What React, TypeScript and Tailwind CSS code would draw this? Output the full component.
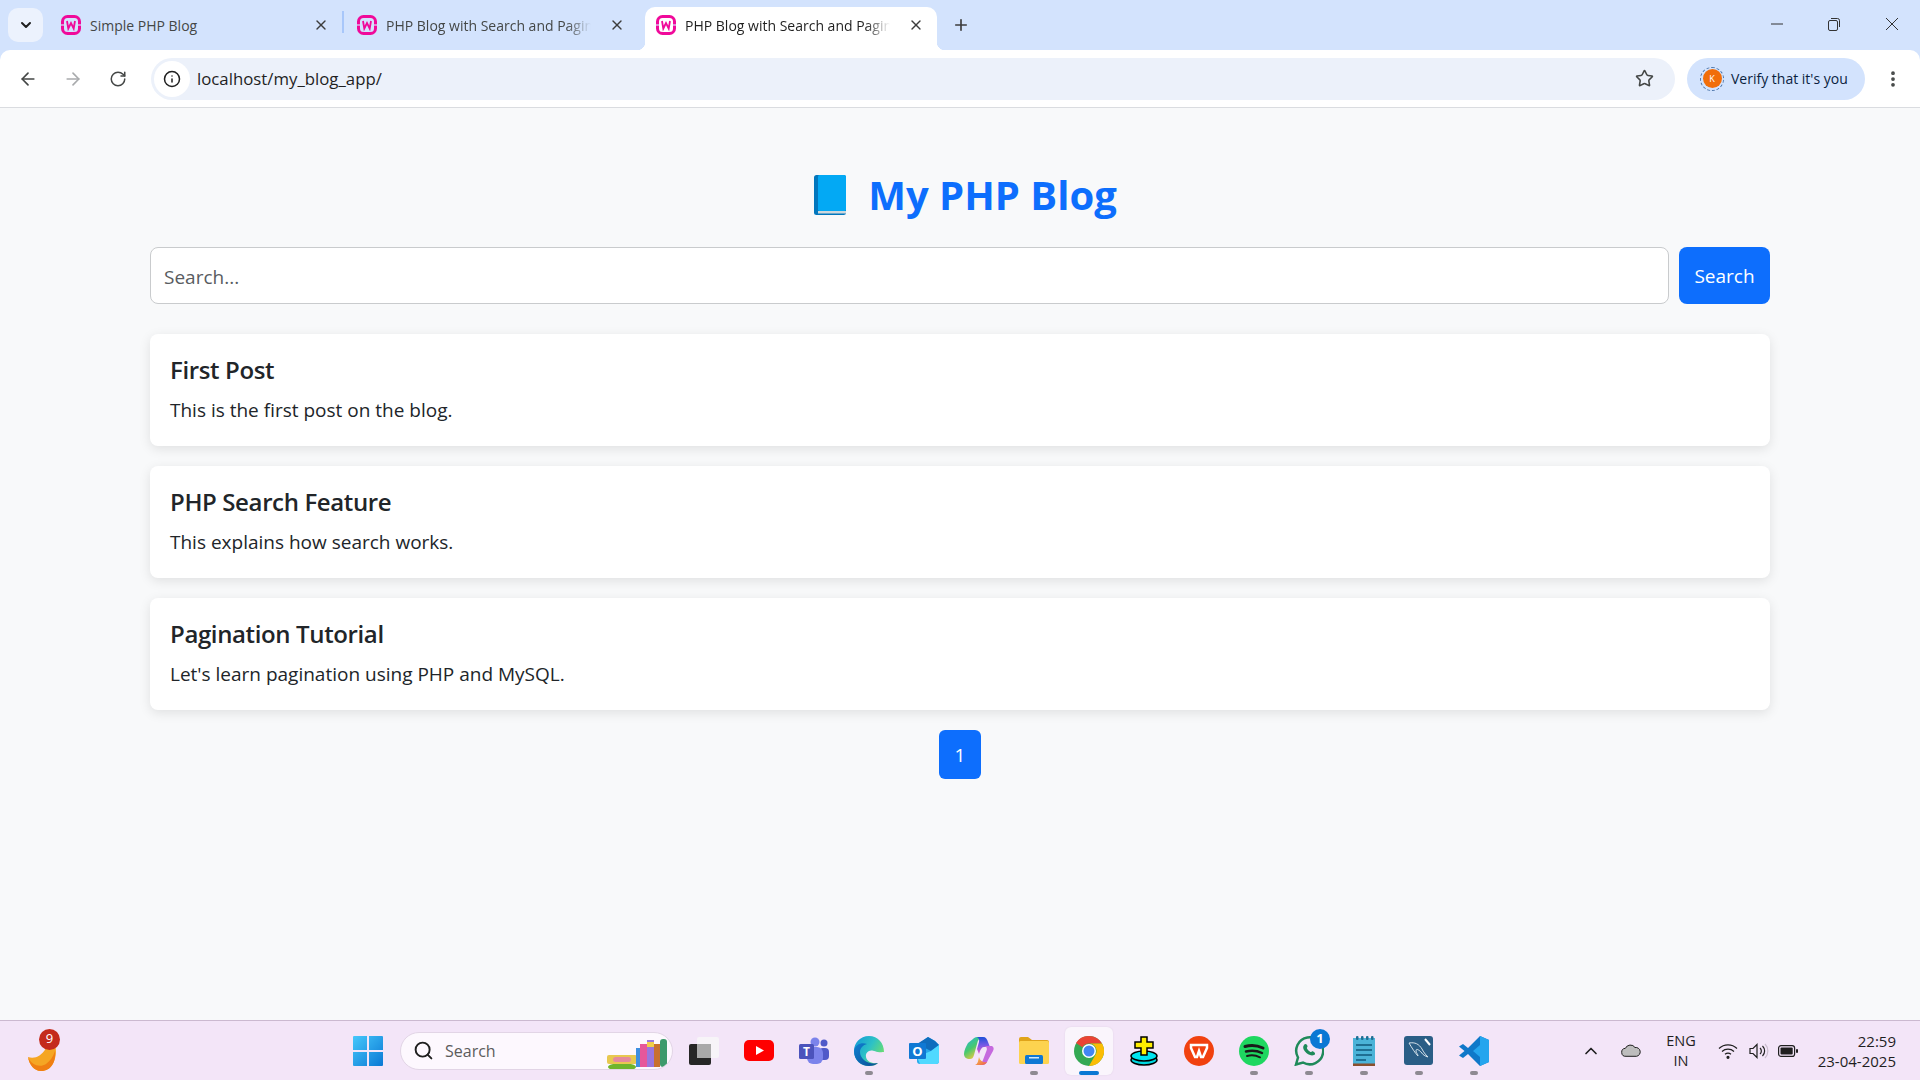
import { ArrowLeft, ArrowRight, ChevronDown, ChevronUp, Info, MoreVertical, Plus, RotateCw, Search, Star, X } from "lucide-react"

const uiFont = "font-['Open_Sans',sans-serif]"

function WampIcon() {
    return (
        <svg width="20" height="20" viewBox="0 0 20 20">
            <rect x="1.500" y="1.500" width="17" height="17" rx="5" fill="none" stroke="#f0099a" strokeWidth="3" />
            <path d="M0 9h3v2H0zM17 9h3v2h-3z" fill="#d3e3fd" opacity="0.6" />
            <path d="M6 6l1.300 7.500L10 8l2.700 5.500L14 6" fill="none" stroke="#f0099a" strokeWidth="1.800" />
        </svg>
    )
}

function Tab({ title, active, fade }: { title: string; active?: boolean; fade?: boolean }) {
    return (
        <div className={`relative flex h-[43px] w-[292px] shrink-0 items-center rounded-t-[10px] pb-[7px] pl-[11px] pr-[13px] ${active ? "bg-white" : ""}`}>
            {active && <span className="absolute bottom-0 -left-2 h-2 w-2 bg-[radial-gradient(circle_at_0_0,#d3e3fd_8px,#ffffff_8.5px)]" />}
            {active && <span className="absolute bottom-0 -right-2 h-2 w-2 bg-[radial-gradient(circle_at_100%_0,#d3e3fd_8px,#ffffff_8.5px)]" />}
            <WampIcon />
            <span className={`ml-[9px] w-[205px] overflow-hidden whitespace-nowrap text-[14px] ${active ? "text-[#1f1f1f]" : "text-[#444746]"} ${fade ? "[mask-image:linear-gradient(to_right,#000_88%,transparent)]" : ""}`}>{title}</span>
            <X size={16} strokeWidth={2} className="ml-auto text-[#3c3c3c]" />
        </div>
    )
}

function BrowserChrome() {
    return (
        <header className={`shrink-0 bg-[#d3e3fd] ${uiFont}`}>
            <div className="flex h-[50px] items-end">
                <div className="mb-[8px] ml-2 flex h-[34px] w-[35px] items-center justify-center rounded-[10px] bg-[#ecf2fd]">
                    <ChevronDown size={16} strokeWidth={3} className="text-[#1f1f1f]" />
                </div>
                <div className="ml-[7px] flex items-end">
                    <Tab title="Simple PHP Blog" />
                    <div className="mb-[17px] h-[22px] w-[2px] bg-[#a8c7fa]" />
                    <div className="ml-[2px]"><Tab title="PHP Blog with Search and Pagination" fade /></div>
                    <div className="ml-[7px]"><Tab title="PHP Blog with Search and Pagination" active fade /></div>
                </div>
                <Plus size={18} strokeWidth={2.2} className="mb-[16px] ml-[15px] text-[#3c3c3c]" />
                <div className="mb-[19px] ml-auto flex items-center pr-[21px] text-[#333]">
                    <svg width="12" height="2" viewBox="0 0 12 2"><path d="M0 1h12" stroke="currentColor" /></svg>
                    <svg className="ml-[44px]" width="14" height="14" viewBox="0 0 14 14" fill="none" stroke="currentColor"><rect x="1.500" y="3.500" width="9" height="10" rx="1.500" /><path d="M4 1.500h6.500a2 2 0 0 1 2 2V10" /></svg>
                    <svg className="ml-[44px]" width="14" height="14" viewBox="0 0 14 14" stroke="currentColor"><path d="M1 1l12 12M13 1L1 13" /></svg>
                </div>
            </div>
            <div className="flex h-[57px] items-center rounded-t-[10px] bg-white">
                <ArrowLeft size={20} strokeWidth={2} className="ml-[18px] text-[#444746]" />
                <ArrowRight size={20} strokeWidth={2} className="ml-[25px] text-[#a9abad]" />
                <RotateCw size={18} strokeWidth={2} className="ml-[26px] text-[#444746]" />
                <div className="ml-[24px] flex h-[42px] w-[1524px] items-center rounded-full bg-[#ecf1fa] pl-[3px]">
                    <div className="flex h-[36px] w-[36px] items-center justify-center rounded-full bg-white">
                        <Info size={18} strokeWidth={2} className="text-[#1f1f1f]" />
                    </div>
                    <span className="ml-[7px] text-[16.8px] text-[#1f1f1f]">localhost/my_blog_app/</span>
                    <Star size={19} strokeWidth={2} className="ml-auto mr-[21px] text-[#444746]" />
                </div>
                <div className="ml-[12px] flex h-[42px] w-[178px] items-center rounded-full bg-[#d3e3fd] pl-[13px]">
                    <div className="flex h-[24px] w-[24px] items-center justify-center rounded-full border border-dashed border-[#4f78ad]">
                        <span className="flex h-[19px] w-[19px] items-center justify-center rounded-full bg-[#f16e0a] text-[9px] text-white">K</span>
                    </div>
                    <span className="ml-[7px] whitespace-nowrap text-[14px] text-[#0b1f3f]">Verify that it's you</span>
                </div>
                <MoreVertical size={20} strokeWidth={2.5} className="ml-[18px] text-[#444746]" />
            </div>
            <div className="h-[1px] bg-[#dadce0]" />
        </header>
    )
}

function PostCard({ title, body }: { title: string; body: string }) {
    return (
        <article className="h-[112px] rounded-lg bg-white px-5 pt-[18px] shadow-[0_3px_12px_rgba(0,0,0,0.1)]">
            <h2 className="text-[24px] font-semibold leading-[36px] tracking-[-0.37px] text-[#212529]">{title}</h2>
            <p className="mt-[8px] text-[19px] leading-[29px] text-[#212529]">{body}</p>
        </article>
    )
}

function BlogPage() {
    return (
        <main className="flex-1 bg-[#f8f9fa] px-[150px] font-['Open_Sans',sans-serif]">
            <h1 className="mt-[57px] flex items-center justify-center pl-[11px] text-[40px] font-bold leading-[60px] text-[#0d6efd]">
                <svg width="32" height="40" viewBox="0 0 32 40">
                    <rect x="0" y="0" width="32" height="40" rx="2.500" fill="#0277bd" />
                    <rect x="4" y="0" width="28" height="36" rx="1.500" fill="#03a9f4" />
                    <rect x="4" y="36" width="28" height="2.500" fill="#cfd8dc" />
                </svg>
                <span className="ml-[22px]">My PHP Blog</span>
            </h1>
            <form className="mt-[22px] flex gap-[10px]">
                <div className="flex h-[57px] flex-1 items-center rounded-lg border border-[#c9cbcd] bg-white pl-[13px] pt-[3px] text-[19px] text-[#595c5f]">Search...</div>
                <button type="button" className="h-[57px] w-[91px] rounded-lg bg-[#0d6efd] pt-[2px] text-[19px] text-white">Search</button>
            </form>
            <section className="mt-[30px] flex flex-col gap-5">
                <PostCard title="First Post" body="This is the first post on the blog." />
                <PostCard title="PHP Search Feature" body="This explains how search works." />
                <PostCard title="Pagination Tutorial" body="Let's learn pagination using PHP and MySQL." />
            </section>
            <div className="mt-5 flex justify-center">
                <span className="flex h-[49px] w-[42px] items-center justify-center rounded-md bg-[#0d6efd] pt-[2px] text-[19px] text-white">1</span>
            </div>
        </main>
    )
}

function Slot({ children, dot, active }: { children: React.ReactNode; dot?: boolean; active?: boolean }) {
    return (
        <div className={`relative flex h-[48px] shrink-0 items-center justify-center ${active ? "mx-[3.5px] w-[48px] rounded-md bg-[#faf5fc] shadow-[0_0_2px_rgba(0,0,0,0.08)]" : "w-[55px]"}`}>
            {children}
            {dot && <span className="absolute bottom-0 h-[4px] w-[8px] rounded-full bg-[#8e8a92]" />}
            {active && <span className="absolute bottom-0 h-[4px] w-[20px] rounded-full bg-[#0a78d4]" />}
        </div>
    )
}

function TaskbarIcons() {
    return (
        <>
            <Slot>
                <svg width="30" height="28" viewBox="0 0 30 28"><rect x="0" y="7" width="22" height="21" rx="2" fill="#262626" /><rect x="8" y="0" width="22" height="21" rx="2" fill="#f7f4f8" /><rect x="8" y="7" width="14" height="14" fill="#a9a9a9" /></svg>
            </Slot>
            <Slot>
                <svg width="30" height="22" viewBox="0 0 30 22"><rect width="30" height="21" rx="5" fill="#f00" /><path d="M12 6l8 4.500-8 4.500z" fill="#fff" /></svg>
            </Slot>
            <Slot>
                <svg width="30" height="28" viewBox="0 0 30 28">
                    <circle cx="25" cy="6" r="3.500" fill="#5059c9" /><rect x="20" y="11" width="10" height="12" rx="4" fill="#5059c9" />
                    <circle cx="16" cy="5" r="4.500" fill="#7b83eb" /><rect x="8" y="10" width="16" height="17" rx="6" fill="#7b83eb" />
                    <rect x="0" y="7" width="15" height="15" rx="1.500" fill="#4b53bc" /><text x="7.500" y="19" textAnchor="middle" fontSize="12" fontWeight="700" fill="#fff" fontFamily="Open Sans, sans-serif">T</text>
                </svg>
            </Slot>
            <Slot dot>
                <svg width="30" height="30" viewBox="0 0 30 30">
                    <defs>
                        <linearGradient id="edgeTop" x1="0" y1="0" x2="1" y2="0.6"><stop offset="0" stopColor="#1196d8" /><stop offset="0.55" stopColor="#2dc1c6" /><stop offset="1" stopColor="#6fe06a" /></linearGradient>
                        <linearGradient id="edgeLow" x1="0" y1="0" x2="1" y2="1"><stop offset="0" stopColor="#0f7fd0" /><stop offset="1" stopColor="#0b4f96" /></linearGradient>
                    </defs>
                    <path d="M15 0C6 0 0 7 0 15c0 9 7 15 15 15 4 0 7-1 9-3-5 1-11-1-12-6-.7-3 1-5 3-6 4-2 6 2 15 1 0-9-6-16-15-16z" fill="url(#edgeTop)" />
                    <path d="M0 15C1 8 8 6 13 8c-4 1-7 4-7 8 0 7 8 13 18 11-2 2-5 3-9 3C7 30 0 24 0 15z" fill="url(#edgeLow)" />
                </svg>
            </Slot>
            <Slot>
                <svg width="30" height="27" viewBox="0 0 30 27">
                    <path d="M8 8l11-8 7 4 4 4v16a3 3 0 0 1-3 3H11a3 3 0 0 1-3-3z" fill="#28a8ea" />
                    <path d="M19 0l7 4 4 4-8 6-14-7z" fill="#0f6cbd" /><path d="M8 20l14-6 8-6v16a3 3 0 0 1-3 3H11z" fill="#50d9ff" />
                    <rect x="0" y="6" width="17" height="16" rx="1" fill="#0f78d4" /><text x="8.500" y="19" textAnchor="middle" fontSize="13" fontWeight="700" fill="#fff" fontFamily="Open Sans, sans-serif">O</text>
                </svg>
            </Slot>
            <Slot>
                <svg width="30" height="28" viewBox="0 0 30 28">
                    <defs>
                        <linearGradient id="copA" x1="0" y1="0" x2="0.6" y2="1"><stop offset="0" stopColor="#1fb6e0" /><stop offset="0.55" stopColor="#47c96f" /><stop offset="1" stopColor="#f5c93c" /></linearGradient>
                        <linearGradient id="copB" x1="0.5" y1="0" x2="0.5" y2="1"><stop offset="0" stopColor="#1c4fd8" /><stop offset="0.5" stopColor="#7a5ae6" /><stop offset="1" stopColor="#e457c2" /></linearGradient>
                        <linearGradient id="copC" x1="0" y1="0" x2="1" y2="1"><stop offset="0" stopColor="#f5d04a" /><stop offset="1" stopColor="#ef5a4c" /></linearGradient>
                    </defs>
                    <path d="M9 2c1-1 2-2 4-2h5c-3 1-4 3-5 7l-3 11c-1 3-2 4-4 4-4 0-6-2-6-5 0-4 2-7 4-11z" fill="url(#copA)" />
                    <path d="M13 0h6c3 0 4 2 5 5l2 5h-6c-2 0-3 2-4 4l-1 3-2-5 2-7c.5-2 0-4-2-5z" fill="url(#copB)" />
                    <path d="M11 28h7c3 0 5-2 6-5l5-9c1-2 1-4-1-5h-8c4 1 3 4 2 6l-3 8c-1 3-4 5-8 5z" fill="#c569de" />
                    <path d="M11 28h7c2 0 4-1 5-3-4 1-7-1-8-5-1 4-1 7-4 8z" fill="url(#copC)" />
                </svg>
            </Slot>
            <Slot dot>
                <svg width="30" height="27" viewBox="0 0 30 27">
                    <path d="M0 2a2 2 0 0 1 2-2h7l4 3h15a2 2 0 0 1 2 2v3H0z" fill="#e0a41a" />
                    <rect x="0" y="4" width="30" height="23" rx="1.500" fill="#fdd34f" />
                    <rect x="6" y="18" width="18" height="9" rx="1.500" fill="#0f78d4" /><rect x="10" y="20" width="10" height="1.500" fill="#cfe8fb" />
                </svg>
            </Slot>
            <Slot active>
                <svg width="30" height="30" viewBox="0 0 30 30">
                    <circle cx="15" cy="15" r="15" fill="#34a853" />
                    <path d="M15 0a15 15 0 0 1 13 7.500H15a7.500 7.500 0 0 0-6.500 3.750L2 7a15 15 0 0 1 13-7z" fill="#ea4335" />
                    <path d="M28 7.500A15 15 0 0 1 15 30l6.500-11.250A7.500 7.500 0 0 0 15 7.500z" fill="#fbbc04" />
                    <circle cx="15" cy="15" r="7" fill="#fff" /><circle cx="15" cy="15" r="5.500" fill="#4285f4" />
                </svg>
            </Slot>
            <Slot>
                <svg width="28" height="30" viewBox="0 0 28 30">
                    <ellipse cx="14" cy="24" rx="13" ry="5" fill="#00d8e0" stroke="#000" strokeWidth="1.500" />
                    <ellipse cx="14" cy="20" rx="13" ry="5" fill="#00e5f0" stroke="#000" strokeWidth="1.500" />
                    <path d="M11 1h6v5h6v6h-6v7h-6v-7H5V6h6z" fill="#ffee00" stroke="#000" strokeWidth="1.500" />
                </svg>
            </Slot>
            <Slot>
                <svg width="30" height="30" viewBox="0 0 30 30">
                    <circle cx="15" cy="15" r="15" fill="#f1410f" />
                    <path d="M7 9h16v3l-4 9h-2l-2-6-2 6h-2L7 12z" fill="none" stroke="#fff" strokeWidth="2.500" />
                </svg>
            </Slot>
            <Slot dot>
                <svg width="30" height="30" viewBox="0 0 30 30">
                    <circle cx="15" cy="15" r="15" fill="#1ed760" />
                    <g fill="none" stroke="#1a1a1a" strokeLinecap="round"><path d="M6 10.500c6-1.700 12-1.300 18 1.500" strokeWidth="3" /><path d="M7 15.500c5-1.300 11-1 16 1.500" strokeWidth="2.500" /><path d="M8 20c4-1 9-.7 13 1.300" strokeWidth="2" /></g>
                </svg>
            </Slot>
            <Slot dot>
                <svg width="30" height="30" viewBox="0 0 30 30">
                    <path d="M2 28.500l2-7a13.500 13.500 0 1 1 5 5z" fill="#f3e5f8" stroke="#1f8a5a" strokeWidth="2.500" />
                    <path d="M10 9c1-2 3-1 3.500 1 .3 1-1 1.500-.5 2.500.7 1.500 2 2.800 3.500 3.500 1 .4 1.500-1 2.500-.6 2 .8 3 2.500 1 3.600-3 1.500-7-1-9-3.500-2-2.500-2.500-4.500-1-6.500z" fill="#1f8a5a" />
                </svg>
                <span className="absolute right-[6px] top-[2px] flex h-[20px] w-[20px] items-center justify-center rounded-full bg-[#0a78d4] text-[13px] font-bold text-white">1</span>
            </Slot>
            <Slot dot>
                <svg width="22" height="30" viewBox="0 0 22 30">
                    <rect x="0" y="2" width="22" height="28" fill="#4bb3d8" /><rect x="0" y="27.500" width="22" height="2.500" fill="#8a4f2d" />
                    <g fill="#1f6f93"><rect x="3" y="0" width="2.500" height="4" rx="1" /><rect x="8" y="0" width="2.500" height="4" rx="1" /><rect x="13" y="0" width="2.500" height="4" rx="1" /><rect x="18" y="0" width="2.500" height="4" rx="1" /><rect x="3" y="8" width="16" height="2" /><rect x="3" y="13" width="16" height="2" /><rect x="3" y="18" width="16" height="2" /><rect x="3" y="23" width="10" height="2" /></g>
                </svg>
            </Slot>
            <Slot dot>
                <svg width="29" height="29" viewBox="0 0 29 29">
                    <rect width="29" height="29" rx="3" fill="#2a5e86" />
                    <path d="M5 7c6-1 10 1 13 6 1.500 3 3 5 6 8-3-1-5-2-7-5-2-2-5-4-5-1 0 2 2 3 2 5-3-3-6-8-9-13z" fill="none" stroke="#d5e2ea" strokeWidth="1" />
                    <path d="M21 3l5 6" stroke="#fff" strokeWidth="2" />
                </svg>
            </Slot>
            <Slot dot>
                <svg width="30" height="30" viewBox="0 0 30 30">
                    <path d="M21 0l9 4v22l-9 4L9 18l-5 4-4-2.500L5.500 15 0 10.500 4 8l5 4z" fill="#0f78c9" />
                    <path d="M21 0l9 4v22l-9 4V21l-7-6 7-6z" fill="#25a5ee" />
                </svg>
            </Slot>
        </>
    )
}

function Taskbar() {
    return (
        <footer className={`relative flex h-[60px] shrink-0 items-center border-t border-[#cbb9d0] bg-[#f3e5f8] ${uiFont}`}>
            <div className="relative ml-[28px] h-[32px] w-[30px]">
                <svg className="absolute bottom-[-4px] left-0" width="29" height="26" viewBox="0 0 29 26">
                    <path d="M0 12c6 2 13 0 18-9 2-3 6-3 9-3 3 9-1 26-14 26C6 26 1 19 0 12z" fill="#f5a623" />
                    <path d="M0 12c3 8 12 11 18 7 4-3 7-7 9-13 1 10-3 20-14 20C6 26 1 19 0 12z" fill="#f07f12" />
                </svg>
                <span className="absolute -top-[6px] left-[11px] flex h-[21px] w-[21px] items-center justify-center rounded-full bg-[#c42b1c] text-[13px] text-white">9</span>
            </div>
            <svg className="ml-[295px]" width="30" height="30" viewBox="0 0 30 30">
                <defs><linearGradient id="winGrad" x1="0" y1="0" x2="1" y2="1"><stop offset="0" stopColor="#46c8fb" /><stop offset="1" stopColor="#0a78d4" /></linearGradient></defs>
                <path d="M1 0h13v14H0V1a1 1 0 0 1 1-1zM16 0h13a1 1 0 0 1 1 1v13H16zM0 16h14v14H1a1 1 0 0 1-1-1zM16 16h14v13a1 1 0 0 1-1 1H16z" fill="url(#winGrad)" />
            </svg>
            <div className="relative ml-[17px] flex h-[38px] w-[273px] items-center overflow-hidden rounded-full border border-[#e2d5e6] bg-[#fdf8fe] pl-[12px]">
                <Search size={21} strokeWidth={2.2} className="text-[#1f1f1f]" />
                <span className="ml-[11px] text-[16px] text-[#5c5c5c]">Search</span>
                <svg className="absolute bottom-0 right-0" width="66" height="31" viewBox="0 0 66 31">
                    <ellipse cx="16" cy="29" rx="14" ry="4" fill="#6fb52c" />
                    <rect x="1" y="17" width="30" height="9" rx="2" fill="#e8c850" /><rect x="7" y="19" width="18" height="5" rx="2.500" fill="#e58a9c" />
                    <rect x="30" y="10" width="4" height="19" fill="#3f8fe0" /><rect x="34" y="6" width="7" height="23" fill="#e6579a" /><rect x="41" y="2" width="7" height="27" fill="#9a76dc" /><rect x="41" y="4" width="7" height="5" fill="#f0cf4a" /><rect x="48" y="6" width="6" height="23" fill="#c8702e" /><rect x="54" y="1" width="7" height="28" rx="3" fill="#3d9a6c" />
                </svg>
            </div>
            <div className="ml-[3px] flex items-center">
                <TaskbarIcons />
            </div>
            <div className="ml-auto flex items-center pr-[24px] text-[#1f1f1f]">
                <ChevronUp size={20} strokeWidth={2} />
                <svg className="ml-[20px]" width="20" height="13" viewBox="0 0 20 13"><path d="M5 12.300a4 4 0 0 1-.6-8A5.500 5.500 0 0 1 14 3.500a4.300 4.300 0 0 1 1.500 8.800z" fill="#bdbdbd" stroke="#1f1f1f" /></svg>
                <div className="ml-[25px] flex flex-col items-center text-[14.5px] leading-[20px]"><span>ENG</span><span>IN</span></div>
                <svg className="ml-[22px]" width="20" height="16" viewBox="0 0 20 16" fill="none" stroke="#1f1f1f" strokeWidth="1.200"><path d="M1 5.500a13 13 0 0 1 18 0" /><path d="M4 8.500a9 9 0 0 1 12 0" /><path d="M7 11.300a5 5 0 0 1 6 0" /><circle cx="10" cy="14.300" r="1" fill="#1f1f1f" /></svg>
                <svg className="ml-[11px]" width="20" height="16" viewBox="0 0 20 16" fill="none" stroke="#1f1f1f" strokeWidth="1.200"><path d="M1 5.500h3l4-4v13l-4-4H1z" /><path d="M11 5a4 4 0 0 1 0 6" /><path d="M13.500 3a7 7 0 0 1 0 10" /><path d="M16 1a10 10 0 0 1 0 14" stroke="#c9bccd" /></svg>
                <svg className="ml-[9px]" width="20" height="12" viewBox="0 0 20 12"><rect x="0.600" y="0.600" width="16" height="10.800" rx="2.500" fill="none" stroke="#1f1f1f" strokeWidth="1.200" /><rect x="2.500" y="2.500" width="12.200" height="7" rx="1" fill="#1f1f1f" /><rect x="18" y="4" width="2" height="4" rx="1" fill="#1f1f1f" /></svg>
                <div className="ml-[20px] flex flex-col items-end text-[15px] leading-[20px]"><span>22:59</span><span>23-04-2025</span></div>
            </div>
        </footer>
    )
}

export default function App() {
    return (
        <div className="flex h-screen w-full flex-col overflow-hidden">
            <BrowserChrome />
            <BlogPage />
            <Taskbar />
        </div>
    )
}
